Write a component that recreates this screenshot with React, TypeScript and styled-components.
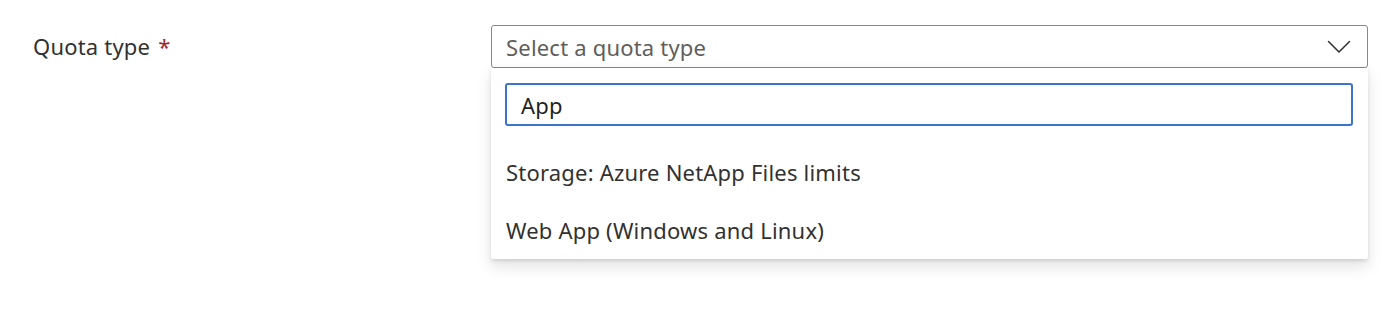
import React from "react";
import styled, { createGlobalStyle } from "styled-components";

const Global = createGlobalStyle`
  html, body { margin: 0; padding: 0; background: #ffffff; }
  body { font-family: "Noto Sans", "Open Sans", sans-serif; color: #323130; }
  * { box-sizing: border-box; }
`;

const Page = styled.div`
  width: 1400px;
  height: 321px;
  padding-top: 25px;
  padding-left: 33px;
`;

const FieldRow = styled.div`
  display: grid;
  grid-template-columns: 458px 877px;
  align-items: start;
`;

const Label = styled.label`
  font-size: 22px;
  line-height: 43px;
  color: #323130;
  letter-spacing: 0.2px;
`;

const Required = styled.span`
  color: #a4262c;
  margin-left: 8px;
`;

const Combo = styled.div`
  position: relative;
`;

const Trigger = styled.div`
  height: 43px;
  border: 1px solid #8a8886;
  border-radius: 3px;
  display: flex;
  align-items: center;
  justify-content: space-between;
  padding: 0 16px 0 14px;
  background: #fff;
`;

const Placeholder = styled.span`
  font-size: 22px;
  color: #605e5c;
  letter-spacing: 0.2px;
`;

const Panel = styled.div`
  position: absolute;
  top: 43px;
  left: 0;
  right: 0;
  background: #fff;
  padding: 15px 15px 0 14px;
  box-shadow: 0 6.4px 14.4px rgba(0, 0, 0, 0.12), 0 1.2px 3.6px rgba(0, 0, 0, 0.1);
  border-radius: 0 0 2px 2px;
`;

const SearchBox = styled.div`
  height: 43px;
  border: 2px solid #3b73cf;
  border-radius: 3px;
  display: flex;
  align-items: center;
  padding-left: 14px;
  font-size: 22px;
  color: #201f1e;
  letter-spacing: 0.2px;
`;

const List = styled.ul`
  list-style: none;
  margin: 17px 0 0 -14px;
  padding: 0;
`;

const Item = styled.li`
  height: 58px;
  display: flex;
  align-items: center;
  padding-left: 15px;
  font-size: 22px;
  color: #323130;
  letter-spacing: 0.2px;
`;

const Chevron = () => (
  <svg width="24" height="14" viewBox="0 0 24 14" fill="none">
    <path d="M1.5 1.5 L12 12 L22.5 1.5" stroke="#323130" strokeWidth="1.5" strokeLinecap="round" strokeLinejoin="round" />
  </svg>
);

export default function App() {
  return (
    <>
      <Global />
      <Page>
        <FieldRow>
          <Label>
            Quota type<Required>*</Required>
          </Label>
          <Combo>
            <Trigger>
              <Placeholder>Select a quota type</Placeholder>
              <Chevron />
            </Trigger>
            <Panel>
              <SearchBox>App</SearchBox>
              <List>
                <Item>Storage: Azure NetApp Files limits</Item>
                <Item>Web App (Windows and Linux)</Item>
              </List>
            </Panel>
          </Combo>
        </FieldRow>
      </Page>
    </>
  );
}
